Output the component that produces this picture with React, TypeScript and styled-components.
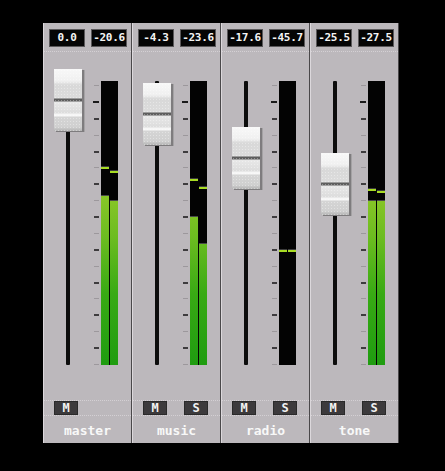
import React from "react";
import styled, { createGlobalStyle } from "styled-components";

const Global = createGlobalStyle`
  html, body { margin: 0; padding: 0; background: #000; }
  body { width: 445px; height: 471px; overflow: hidden; }
`;

const METER_TOP = 82;
const METER_BOTTOM = 365;
const METER_H = METER_BOTTOM - METER_TOP;
const BODY_TOP = 53;

type Chan = { top: number | null; peak: number };
type StripData = {
  name: string;
  values: [string, string];
  capTop: number;
  left: Chan;
  right: Chan;
  solo: boolean;
};

const strips: StripData[] = [
  { name: "master", values: ["0.0", "-20.6"], capTop: 70, left: { top: 196, peak: 168 }, right: { top: 201, peak: 172 }, solo: false },
  { name: "music", values: ["-4.3", "-23.6"], capTop: 84, left: { top: 217, peak: 180 }, right: { top: 244, peak: 188 }, solo: true },
  { name: "radio", values: ["-17.6", "-45.7"], capTop: 128, left: { top: null, peak: 251 }, right: { top: null, peak: 251 }, solo: true },
  { name: "tone", values: ["-25.5", "-27.5"], capTop: 154, left: { top: 201, peak: 190 }, right: { top: 201, peak: 192 }, solo: true },
];

const Page = styled.div`
  padding: 23px 0 0 43px;
`;

const Panel = styled.div`
  display: flex;
  width: 356px;
  height: 420px;
  background: #bcb8bc;
`;

const Strip = styled.div`
  display: flex;
  flex-direction: column;
  width: 89px;
  box-sizing: border-box;
  border-left: 1px solid #dcd8dc;
  border-right: 1px solid #4a484a;
`;

const Header = styled.div`
  height: 29px;
  display: flex;
  align-items: flex-start;
  padding: 6px 0 0 5px;
  box-sizing: border-box;
  gap: 6px;
  border-bottom: 1px dotted #d4d0d4;
`;

const ValueBox = styled.div`
  width: 36px;
  height: 18px;
  box-sizing: border-box;
  background: #050505;
  border: 1px solid #5a585a;
  color: #f4f4f4;
  font-family: "DejaVu Sans Mono", monospace;
  font-weight: bold;
  font-size: 11px;
  line-height: 16px;
  text-align: center;
  letter-spacing: -0.3px;
`;

const Body = styled.div`
  flex: 1;
  display: flex;
  padding: ${METER_TOP - BODY_TOP}px 0 ${400 - METER_BOTTOM}px 0;
  box-sizing: border-box;
`;

const FaderArea = styled.div`
  position: relative;
  width: 49px;
  height: 100%;
`;

const Track = styled.div`
  margin-left: 22px;
  width: 4px;
  height: 100%;
  background: #0c0c0c;
  border-radius: 1px;
`;

const Cap = styled.div`
  position: absolute;
  left: 10px;
  width: 28px;
  height: 62px;
  box-shadow: 2px 1px 0 #7e7c7e, 3px 1px 0 #a4a2a4;
  background:
    radial-gradient(circle, rgba(255,255,255,0.35) 0.5px, transparent 0.7px) 0 0 / 3px 3px,
    linear-gradient(
      to bottom,
      #f8f8f8 0px,
      #f0f0f0 12px,
      #d8d8d8 16px,
      #dcdcdc 29px,
      #5e5e5e 30px,
      #5e5e5e 32px,
      #e8e8e8 33px,
      #dcdcdc 44px,
      #f6f6f6 45px,
      #f6f6f6 47px,
      #d4d4d4 48px,
      #d0d0d0 58px,
      #b4b4b4 62px
    );
`;

const Scale = styled.div`
  width: 6px;
  padding-top: 4px;
  box-sizing: border-box;
  height: 100%;
  display: flex;
  flex-direction: column;
  justify-content: space-between;
  align-items: flex-end;
`;

const Tick = styled.div<{ $kind: "major" | "dark" | "light" }>`
  width: ${(p) => (p.$kind === "major" ? 6 : 5)}px;
  height: ${(p) => (p.$kind === "light" ? 1 : 2)}px;
  background: ${(p) => (p.$kind === "major" ? "#1a1a1a" : p.$kind === "dark" ? "#3e3c3e" : "#9c989c")};
`;

const Meter = styled.div`
  margin-left: 2px;
  width: 17px;
  height: 100%;
  background: #030303;
  display: flex;
  gap: 1px;
`;

const Channel = styled.div`
  position: relative;
  flex: 1;
  height: 100%;
  display: flex;
  flex-direction: column;
  justify-content: flex-end;
`;

const Level = styled.div`
  border-top: 1px solid #4a4a4a;
  background: linear-gradient(
      to bottom,
      #b8dc3c 0%,
      #9ccc2c 30%,
      #6cbc20 55%,
      #38aa14 75%,
      #1f9c10 100%
    )
    bottom / 100% ${METER_H}px no-repeat;
`;

const Peak = styled.div`
  position: absolute;
  left: 0;
  right: 0;
  height: 2px;
  background: #a8dc24;
  border-top: 1px solid #3c3c3c;
`;

const ButtonRow = styled.div`
  height: 16px;
  box-sizing: border-box;
  border-top: 1px dotted #d4d0d4;
  border-bottom: 1px dotted #d4d0d4;
  display: flex;
  align-items: center;
  padding-left: 10px;
  gap: 17px;
`;

const ToggleButton = styled.div`
  width: 24px;
  height: 14px;
  box-sizing: border-box;
  background: #3c3a3c;
  border: 1px solid #2a2a2a;
  color: #f2f2f2;
  font-family: "DejaVu Sans Mono", monospace;
  font-weight: bold;
  font-size: 12px;
  line-height: 12px;
  text-align: center;
`;

const NameRow = styled.div`
  height: 27px;
  display: flex;
  align-items: center;
  justify-content: center;
  color: #f8f8f8;
  font-family: "DejaVu Sans Mono", monospace;
  font-weight: bold;
  font-size: 13px;
  padding-top: 1px;
  box-sizing: border-box;
`;

const tickKinds: ("major" | "dark" | "light")[] = Array.from({ length: 18 }, (_, i) =>
  i === 1 ? "major" : i === 0 ? "light" : i % 2 === 0 ? "dark" : "light"
);

function MeterChannel({ chan }: { chan: Chan }) {
  return (
    <Channel>
      <Peak style={{ top: chan.peak - METER_TOP - 1 }} />
      {chan.top !== null && <Level style={{ height: METER_BOTTOM - chan.top }} />}
    </Channel>
  );
}

function MixerStrip({ s }: { s: StripData }) {
  return (
    <Strip>
      <Header>
        <ValueBox>{s.values[0]}</ValueBox>
        <ValueBox>{s.values[1]}</ValueBox>
      </Header>
      <Body>
        <FaderArea>
          <Track />
          <Cap style={{ top: s.capTop - METER_TOP }} />
        </FaderArea>
        <Scale>
          {tickKinds.map((k, i) => (
            <Tick key={i} $kind={k} />
          ))}
        </Scale>
        <Meter>
          <MeterChannel chan={s.left} />
          <MeterChannel chan={s.right} />
        </Meter>
      </Body>
      <ButtonRow>
        <ToggleButton>M</ToggleButton>
        {s.solo && <ToggleButton>S</ToggleButton>}
      </ButtonRow>
      <NameRow>{s.name}</NameRow>
    </Strip>
  );
}

export default function App() {
  return (
    <>
      <Global />
      <Page>
        <Panel>
          {strips.map((s) => (
            <MixerStrip key={s.name} s={s} />
          ))}
        </Panel>
      </Page>
    </>
  );
}
